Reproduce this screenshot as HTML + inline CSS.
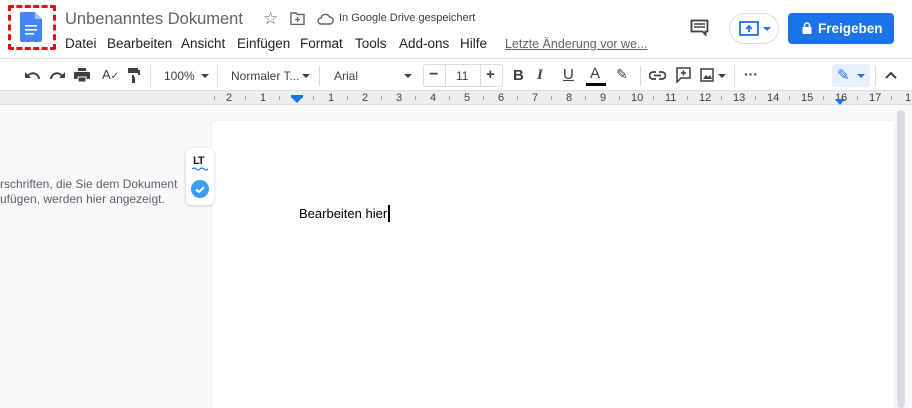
<!DOCTYPE html>
<html><head><meta charset="utf-8"><style>
*{margin:0;padding:0;box-sizing:border-box}
body{width:912px;height:408px;overflow:hidden;background:#f8f9fa;font-family:"Liberation Sans",Arial,sans-serif;position:relative;color:#3c4043}
.a{position:absolute}
.hdr{left:0;top:0;width:912px;height:58px;background:#fff}
.tb{left:0;top:58px;width:912px;height:33px;background:#fff;border-top:1px solid #dadce0;border-bottom:1px solid #dadce0}
.menu span{position:absolute;top:36px;font-size:13.5px;color:#202124}
.sep{position:absolute;top:66px;width:1px;height:20px;background:#dadce0}
.ruler{left:0;top:91px;width:912px;height:14px;background:#eceef0;border-bottom:1px solid #dadce0}
.rn{position:absolute;top:1px;font-size:11px;color:#3c4043}
.tk{position:absolute;top:5px;width:1px;height:4px;background:#9aa0a6}
.t{font-size:12px;color:#3c4043;position:absolute}
</style></head><body>
<div class="a hdr"></div>
<div class="a" style="left:8px;top:5px;width:48px;height:45px;border:3px dashed #e01010;border-radius:2px"></div>
<svg class="a" style="left:20px;top:12px" width="22" height="30" viewBox="0 0 22 30"><path d="M2 0h13l7 7v21a2 2 0 0 1-2 2H2a2 2 0 0 1-2-2V2a2 2 0 0 1 2-2z" fill="#4285f4"/><path d="M15 0v7h7z" fill="#a1c2fa"/><rect x="5" y="13" width="12" height="1.6" fill="#fff"/><rect x="5" y="17" width="12" height="1.6" fill="#fff"/><rect x="5" y="21" width="9" height="1.6" fill="#fff"/></svg>
<div class="a" style="left:65px;top:10px;font-size:16.5px;color:#5f6368">Unbenanntes Dokument</div>
<div class="a" style="left:263px;top:9px;font-size:17px;color:#5f6368">☆</div>
<svg class="a" style="left:290px;top:12px" width="15" height="13" viewBox="0 0 15 13"><path d="M1 1h5l1.5 1.5H14v10H1z" fill="none" stroke="#5f6368" stroke-width="1.4"/><path d="M7.5 5v5M5 7.5h5" stroke="#5f6368" stroke-width="1.3"/></svg>
<svg class="a" style="left:317px;top:13px" width="17" height="12" viewBox="0 0 17 12"><path d="M4 11a3 3 0 0 1 0-6 4.5 4.5 0 0 1 8.5-1A3.5 3.5 0 0 1 13 11z" fill="none" stroke="#5f6368" stroke-width="1.4"/></svg>
<div class="a" style="left:339px;top:12px;font-size:11px;color:#3c4043">In Google Drive gespeichert</div>
<div class="menu">
<span style="left:65px">Datei</span><span style="left:107px">Bearbeiten</span><span style="left:181px">Ansicht</span><span style="left:237px">Einfügen</span><span style="left:300px">Format</span><span style="left:355px">Tools</span><span style="left:399px">Add-ons</span><span style="left:460px">Hilfe</span>
<span style="left:505px;color:#5f6368;text-decoration:underline;font-size:12.5px;top:37px">Letzte Änderung vor we...</span>
</div>
<svg class="a" style="left:690px;top:19px" width="19" height="18" viewBox="0 0 19 18"><path d="M1.5 1.5h16v11h-2v3l-3-3h-11z" fill="none" stroke="#3c4043" stroke-width="1.8"/><path d="M4 5h11M4 8h11" stroke="#3c4043" stroke-width="1.5"/></svg>
<div class="a" style="left:729px;top:13px;width:50px;height:31px;border:1px solid #dadce0;border-radius:16px"></div>
<svg class="a" style="left:739px;top:21px" width="20" height="16" viewBox="0 0 20 16"><rect x="1" y="1" width="18" height="13" fill="none" stroke="#1a73e8" stroke-width="1.8"/><path d="M10 11V5M7 8l3-3 3 3" stroke="#1a73e8" stroke-width="1.8" fill="none"/></svg>
<div class="a" style="left:763px;top:27px;border:4px solid transparent;border-top:4px solid #1a73e8"></div>
<div class="a" style="left:788px;top:13px;width:106px;height:31px;background:#1a73e8;border-radius:4px;color:#fff;font-size:13.5px;font-weight:bold;line-height:31px;padding-left:30px">Freigeben</div>
<svg class="a" style="left:802px;top:22px" width="10" height="12" viewBox="0 0 10 12"><rect x="0.5" y="5" width="9" height="7" fill="#fff"/><path d="M2.5 5V3.5a2.5 2.5 0 0 1 5 0V5" stroke="#fff" stroke-width="1.5" fill="none"/></svg>

<div class="a tb"></div>
<svg class="a" style="left:24px;top:70px" width="16" height="10" viewBox="0 0 16 10"><path d="M15 9a6 6 0 0 0-11-3" stroke="#3c4043" stroke-width="2" fill="none"/><path d="M1 2v6h6z" fill="#3c4043"/></svg>
<svg class="a" style="left:50px;top:70px" width="16" height="10" viewBox="0 0 16 10"><path d="M1 9a6 6 0 0 1 11-3" stroke="#3c4043" stroke-width="2" fill="none"/><path d="M15 2v6H9z" fill="#3c4043"/></svg>
<svg class="a" style="left:74px;top:68px" width="16" height="14" viewBox="0 0 16 14"><rect x="4" y="0" width="8" height="3" fill="#3c4043"/><rect x="0" y="4" width="16" height="7" rx="1" fill="#3c4043"/><rect x="4" y="9" width="8" height="5" fill="#3c4043" stroke="#fff" stroke-width="1"/></svg>
<div class="t" style="left:102px;top:67px;font-size:13px">A<span style="font-size:10px">✓</span></div>
<svg class="a" style="left:128px;top:68px" width="12" height="15" viewBox="0 0 12 15"><path d="M0 0h10v2h2v5H6v2h1v6H4V7h6V5H0z" fill="#3c4043"/></svg>
<div class="sep" style="left:150px"></div>
<div class="t" style="left:164px;top:69px">100%</div>
<div class="a" style="left:201px;top:74px;border:4px solid transparent;border-top:4px solid #3c4043"></div>
<div class="sep" style="left:217px"></div>
<div class="t" style="left:231px;top:69px">Normaler T...</div>
<div class="a" style="left:302px;top:74px;border:4px solid transparent;border-top:4px solid #3c4043"></div>
<div class="sep" style="left:319px"></div>
<div class="t" style="left:334px;top:69px">Arial</div>
<div class="a" style="left:404px;top:74px;border:4px solid transparent;border-top:4px solid #3c4043"></div>
<div class="a" style="left:423px;top:64px;width:80px;height:23px;border:1px solid #dadce0;border-radius:3px"></div>
<div class="a" style="left:445px;top:64px;width:1px;height:23px;background:#dadce0"></div>
<div class="a" style="left:480px;top:64px;width:1px;height:23px;background:#dadce0"></div>
<div class="t" style="left:429px;top:66px;font-size:16px;font-weight:bold">−</div>
<div class="t" style="left:456px;top:69px">11</div>
<div class="t" style="left:486px;top:66px;font-size:15px;font-weight:bold">+</div>
<div class="t" style="left:513px;top:67px;font-size:15px;font-weight:bold">B</div>
<div class="t" style="left:537px;top:67px;font-size:15px;font-style:italic;font-family:'Liberation Serif',serif;font-weight:bold">I</div>
<div class="t" style="left:563px;top:66px;font-size:15px;text-decoration:underline">U</div>
<div class="t" style="left:590px;top:65px;font-size:15px">A</div>
<div class="a" style="left:586px;top:83px;width:20px;height:3px;background:#000"></div>
<div class="t" style="left:616px;top:66px;font-size:14px">✎</div>
<div class="sep" style="left:640px"></div>
<svg class="a" style="left:649px;top:71px" width="17" height="9" viewBox="0 0 17 9"><path d="M7 1H4a3.5 3.5 0 0 0 0 7h3M10 1h3a3.5 3.5 0 0 1 0 7h-3M5 4.5h7" stroke="#3c4043" stroke-width="1.7" fill="none"/></svg>
<svg class="a" style="left:676px;top:67px" width="15" height="16" viewBox="0 0 15 16"><path d="M1 1h13v10H5l-4 4z" fill="none" stroke="#3c4043" stroke-width="1.5"/><path d="M7.5 3.5v5M5 6h5" stroke="#3c4043" stroke-width="1.5"/></svg>
<svg class="a" style="left:700px;top:68px" width="14" height="14" viewBox="0 0 14 14"><rect x="1" y="1" width="12" height="12" fill="none" stroke="#3c4043" stroke-width="1.5"/><path d="M3 11l3-4 2 2 2-2 2 4z" fill="#3c4043"/></svg>
<div class="a" style="left:718px;top:74px;border:4px solid transparent;border-top:4px solid #3c4043"></div>
<div class="sep" style="left:734px"></div>
<div class="t" style="left:744px;top:66px;font-size:14px;font-weight:bold">···</div>
<div class="a" style="left:832px;top:64px;width:38px;height:23px;background:#e8f0fe;border-radius:3px"></div>
<div class="t" style="left:837px;top:66px;font-size:15px;color:#1a73e8">✎</div>
<div class="a" style="left:857px;top:74px;border:4px solid transparent;border-top:4px solid #1a73e8"></div>
<div class="sep" style="left:875px"></div>
<svg class="a" style="left:885px;top:71px" width="12" height="8" viewBox="0 0 12 8"><path d="M1 7l5-5 5 5" stroke="#3c4043" stroke-width="2" fill="none"/></svg>

<div class="a ruler">
<span class="rn" style="left:226px">2</span><span class="rn" style="left:260px">1</span>
<span class="rn" style="left:328px">1</span><span class="rn" style="left:362px">2</span><span class="rn" style="left:396px">3</span><span class="rn" style="left:430px">4</span><span class="rn" style="left:464px">5</span><span class="rn" style="left:498px">6</span><span class="rn" style="left:532px">7</span><span class="rn" style="left:566px">8</span><span class="rn" style="left:600px">9</span><span class="rn" style="left:631px">10</span><span class="rn" style="left:665px">11</span><span class="rn" style="left:699px">12</span><span class="rn" style="left:733px">13</span><span class="rn" style="left:767px">14</span><span class="rn" style="left:801px">15</span><span class="rn" style="left:835px">16</span><span class="rn" style="left:869px">17</span><span class="rn" style="left:905px">1</span>
<span class="tk" style="left:214px"></span><span class="tk" style="left:245px"></span><span class="tk" style="left:279px"></span><span class="tk" style="left:313px"></span><span class="tk" style="left:347px"></span><span class="tk" style="left:381px"></span><span class="tk" style="left:415px"></span><span class="tk" style="left:449px"></span><span class="tk" style="left:483px"></span><span class="tk" style="left:517px"></span><span class="tk" style="left:551px"></span><span class="tk" style="left:585px"></span><span class="tk" style="left:619px"></span><span class="tk" style="left:653px"></span><span class="tk" style="left:687px"></span><span class="tk" style="left:721px"></span><span class="tk" style="left:755px"></span><span class="tk" style="left:789px"></span><span class="tk" style="left:823px"></span><span class="tk" style="left:857px"></span><span class="tk" style="left:891px"></span>
<div class="a" style="left:291px;top:4px;width:12px;height:3px;background:#1a73e8"></div>
<div class="a" style="left:292px;top:7px;border:5px solid transparent;border-top:5px solid #1a73e8;border-bottom:0"></div>
<div class="a" style="left:835px;top:8px;border:5px solid transparent;border-top:6px solid #1a73e8;border-bottom:0"></div>
</div>

<div class="a" style="left:212px;top:121px;width:682px;height:287px;background:#fff;box-shadow:0 0 2px #dadce0"></div>
<div class="a" style="left:897px;top:110px;width:8px;height:298px;background:#dadce0;border-radius:4px"></div>
<div class="a" style="left:0;top:177px;font-size:12px;line-height:15px;color:#5f6368">rschriften, die Sie dem Dokument<br>ufügen, werden hier angezeigt.</div>
<div class="a" style="left:186px;top:148px;width:28px;height:57px;background:#fff;border-radius:5px;box-shadow:0 1px 3px rgba(0,0,0,.2)"></div>
<div class="a" style="left:193px;top:155px;font-size:11px;font-weight:bold;color:#202124;letter-spacing:-1px">LT</div>
<svg class="a" style="left:192px;top:167px" width="16" height="4" viewBox="0 0 16 4"><path d="M0 2q2-2 4 0t4 0 4 0 4 0" stroke="#1a73e8" stroke-width="1.2" fill="none"/></svg>
<svg class="a" style="left:191px;top:180px" width="18" height="18" viewBox="0 0 18 18"><circle cx="9" cy="9" r="9" fill="#3d9cf0"/><path d="M5 9.5l3 2.5 5-5" stroke="#fff" stroke-width="2" fill="none"/></svg>
<div class="a" style="left:299px;top:206px;font-size:13px;color:#000">Bearbeiten hier</div>
<div class="a" style="left:388px;top:205px;width:1.5px;height:17px;background:#000"></div>
</body></html>
